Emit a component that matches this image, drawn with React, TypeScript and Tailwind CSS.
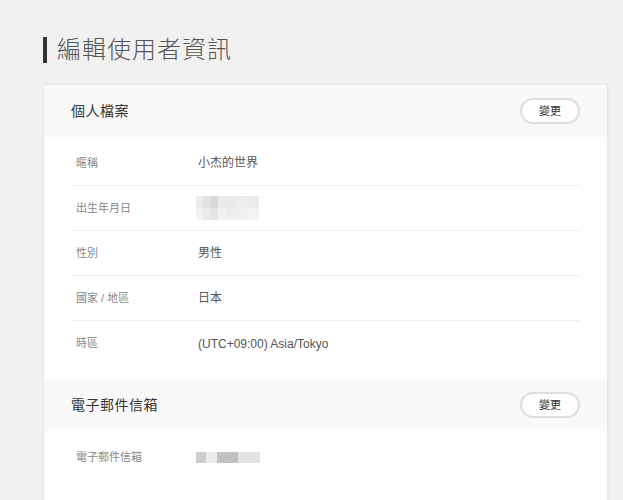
import React from "react";

const fontCJK = {
  fontFamily: '"Liberation Sans", "Noto Sans CJK TC", sans-serif',
};

// pixelated placeholder for hidden values
const BirthdayBlur = () => (
  <div className="flex flex-col w-[63px] h-[24px] -ml-[2px]">
    <div className="flex h-[12px]">
      <div className="w-[6px] bg-[#ececec]" />
      <div className="w-[8px] bg-[#e2e2e2]" />
      <div className="w-[8px] bg-[#d9d9d9]" />
      <div className="w-[8px] bg-[#ebebeb]" />
      <div className="w-[11px] bg-[#e9e9e9]" />
      <div className="w-[10px] bg-[#ededed]" />
      <div className="w-[12px] bg-[#ececec]" />
    </div>
    <div className="flex h-[12px]">
      <div className="w-[6px] bg-[#f3f3f3]" />
      <div className="w-[8px] bg-[#ececec]" />
      <div className="w-[8px] bg-[#e6e6e6]" />
      <div className="w-[8px] bg-[#f2f2f2]" />
      <div className="w-[11px] bg-[#eeeeee]" />
      <div className="w-[10px] bg-[#f0f0f0]" />
      <div className="w-[12px] bg-[#f4f4f4]" />
    </div>
  </div>
);

const EmailBlur = () => (
  <div className="flex h-[11px] w-[64px] -ml-[2px]">
    <div className="w-[10px] bg-[#cdcdcd]" />
    <div className="w-[11px] bg-[#ececec]" />
    <div className="w-[21px] bg-[#c2c2c2]" />
    <div className="w-[22px] bg-[#e4e4e4]" />
  </div>
);

interface Row {
  label: string;
  value: React.ReactNode;
}

const profileRows: Row[] = [
  { label: "暱稱", value: "小杰的世界" },
  { label: "出生年月日", value: <BirthdayBlur /> },
  { label: "性別", value: "男性" },
  { label: "國家 / 地區", value: "日本" },
  { label: "時區", value: "(UTC+09:00) Asia/Tokyo" },
];

const emailRows: Row[] = [{ label: "電子郵件信箱", value: <EmailBlur /> }];

const Section = ({ title, rows }: { title: string; rows: Row[] }) => (
  <div>
    {/* Section header */}
    <div className="flex items-center justify-between h-[52px] px-[27px] bg-[#f9f9f9]">
      <h2 className="text-[14px] tracking-[0.5px] text-[#333]">{title}</h2>
      <button className="w-[60px] h-[26px] rounded-full border-2 border-[#dedede] bg-white text-[11px] text-[#333]">
        變更
      </button>
    </div>

    {/* Rows */}
    <div className="px-[27px] pt-[4px] pb-[13px]">
      {rows.map((row, index) => (
        <div
          key={index}
          className={
            "flex items-center h-[45px] " +
            (index < rows.length - 1 ? "border-b border-[#f0f0f0]" : "")
          }
        >
          <div className="w-[127px] pl-[5px] text-[11px] text-[#888]">
            {row.label}
          </div>
          <div className="text-[12px] text-[#555]">{row.value}</div>
        </div>
      ))}
    </div>
  </div>
);

export default function App() {
  return (
    <div
      className="h-[500px] bg-[#f1f1f1] pl-[43px] pt-[37px] overflow-hidden"
      style={fontCJK}
    >
      {/* Title */}
      <div className="flex items-center h-[26px]">
        <div className="w-[4px] h-[26px] bg-[#333]" />
        <h1 className="ml-[10px] text-[24px] leading-none tracking-[1px] text-[#555] font-light">
          編輯使用者資訊
        </h1>
      </div>

      {/* Card */}
      <div className="mt-[21px] w-[565px] min-h-[460px] bg-white border border-[#e6e6e6] rounded-[3px] shadow-[1px_0_2px_rgba(0,0,0,0.04)]">
        <Section title="個人檔案" rows={profileRows} />
        <Section title="電子郵件信箱" rows={emailRows} />
      </div>
    </div>
  );
}
